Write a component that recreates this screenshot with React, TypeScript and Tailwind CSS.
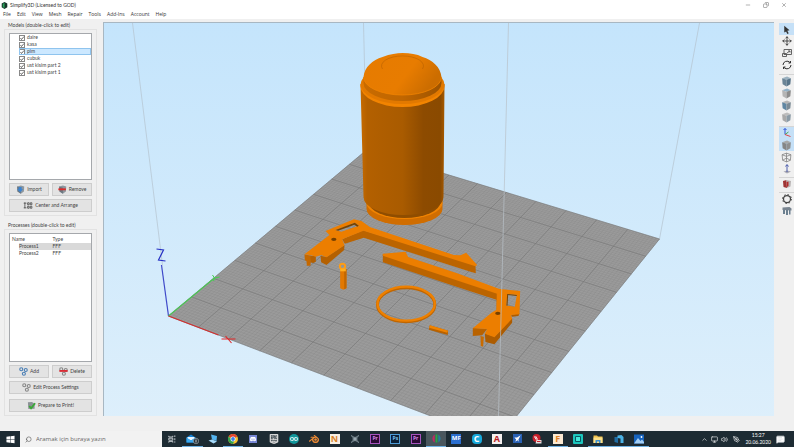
import React, { useState } from "react";
import {
  SiArduino,
  SiBlender,
  SiDiscord,
  SiEpicgames,
} from "react-icons/si";
import {
  ChevronUp,
  Copy,
  MessageSquareText,
  Minus,
  Monitor,
  Move,
  PenTool,
  Search,
  Volume2,
  X,
} from "lucide-react";

const menuItems = [
  "File",
  "Edit",
  "View",
  "Mesh",
  "Repair",
  "Tools",
  "Add-Ins",
  "Account",
  "Help",
];

const modelNames = [
  "daire",
  "kasa",
  "pim",
  "cubuk",
  "ust kisim part 2",
  "ust kisim part 1",
];

const processes = [
  { name: "Process1", type: "FFF" },
  { name: "Process2", type: "FFF" },
];

type Point = [number, number];

// Corners of the print bed: origin, back, right, front
const bed: Point[] = [
  [168, 316],
  [366, 150],
  [659, 239],
  [496, 441],
];

// Maps a position on the bed (0..1 on both sides) to the scene
const project = (u: number, v: number): Point => {
  const [a, d, c, b] = [bed[0], bed[3], bed[2], bed[1]];
  const dx1 = d[0] - c[0];
  const dx2 = b[0] - c[0];
  const sx = a[0] - d[0] + c[0] - b[0];
  const dy1 = d[1] - c[1];
  const dy2 = b[1] - c[1];
  const sy = a[1] - d[1] + c[1] - b[1];
  const det = dx1 * dy2 - dx2 * dy1;
  const g = (sx * dy2 - dx2 * sy) / det;
  const h = (dx1 * sy - sx * dy1) / det;
  const w = g * u + h * v + 1;
  const x = (d[0] - a[0] + g * d[0]) * u + (b[0] - a[0] + h * b[0]) * v + a[0];
  const y = (d[1] - a[1] + g * d[1]) * u + (b[1] - a[1] + h * b[1]) * v + a[1];
  return [x / w, y / w];
};

const gridPath = (divisions: number) => {
  let path = "";
  for (let i = 0; i <= divisions; i++) {
    const t = i / divisions;
    path += `M${project(t, 0).join(" ")}L${project(t, 1).join(" ")}`;
    path += `M${project(0, t).join(" ")}L${project(1, t).join(" ")}`;
  }
  return path;
};

const Cube = ({ top, left, right }: { top: string; left: string; right: string }) => (
  <svg viewBox="0 0 20 20" className="size-[11px]">
    <path d="M2 4 L11 1 L18 4 L10 7Z" fill={top} />
    <path d="M2 4 L10 7 V19 L3 15Z" fill={left} />
    <path d="M10 7 L18 4 L17 15 L10 19Z" fill={right} />
  </svg>
);

const Shield = ({ remove }: { remove?: boolean }) => (
  <svg viewBox="0 0 24 24" className="size-[9px] shrink-0">
    <path d="M3 4 L13 1 L22 4 L21 17 L13 23 L4 17Z" fill="#8d979f" />
    <path d="M3 4 L13 7 V23 L4 17Z" fill="#6c7780" />
    {remove ? (
      <path d="M1 9 H21 V14 H1Z" fill="#dc2a2a" />
    ) : (
      <path d="M7 5 H15 V11 H19 L11 19 L3 11 H7Z" fill="#3c83cf" />
    )}
  </svg>
);

const Gears = ({ color, badge }: { color: string; badge?: string }) => (
  <svg viewBox="0 0 24 24" className="size-[9px] shrink-0" fill="none">
    <circle cx="6" cy="6" r="4" stroke={color} strokeWidth="3" />
    <circle cx="18" cy="8" r="4" stroke={color} strokeWidth="3" />
    <circle cx="13" cy="18" r="4" stroke={color} strokeWidth="3" />
    {badge && <path d="M1 8 H23 V13 H1Z" fill={badge} />}
  </svg>
);

const SideButton = ({
  icon,
  children,
}: {
  icon: React.ReactNode;
  children: React.ReactNode;
}) => (
  <button className="flex h-[13px] flex-1 items-center justify-center gap-[2px] border border-[#cdcdcd] bg-[#e3e3e3] hover:bg-[#e5f1fb]">
    {icon}
    <span>{children}</span>
  </button>
);

const Sidebar: React.FunctionComponent = () => {
  const [checked, setChecked] = useState<boolean[]>(modelNames.map(() => true));
  const [selectedModel, setSelectedModel] = useState(2);
  const [selectedProcess, setSelectedProcess] = useState(0);

  const toggle = (index: number) => {
    setChecked(checked.map((c, i) => (i === index ? !c : c)));
    setSelectedModel(index);
  };

  return (
    <aside className="flex w-[103px] shrink-0 flex-col pr-[6px] pl-1 font-['Lato',sans-serif] text-[5px] leading-[7px] text-[#444]">
      <section className="flex flex-1 flex-col">
        <h2 className="pl-1">Models (double-click to edit)</h2>
        <div className="flex flex-1 flex-col gap-[3px] border border-[#e2e2e2] px-1 py-[3px]">
          <ul className="flex-1 border border-[#a5a8ac] bg-white">
            {modelNames.map((name, index) => (
              <li key={name} className="pl-[9px]">
                <label
                  className={`flex h-[7px] items-center gap-[2px] ${
                    selectedModel === index
                      ? "bg-[#cce8ff] outline -outline-offset-1 outline-[#8fc4ee]"
                      : ""
                  }`}
                >
                  <span className="grid size-[6px] shrink-0 place-items-center">
                    <input
                      type="checkbox"
                      checked={checked[index]}
                      onChange={() => toggle(index)}
                      className="col-start-1 row-start-1 size-[6px] appearance-none border border-[#888] bg-white"
                    />
                    {checked[index] && (
                      <svg viewBox="0 0 12 12" className="pointer-events-none z-10 col-start-1 row-start-1 size-[6px]">
                        <path d="M3 6 L5 9 L10 3" fill="none" stroke="#333" strokeWidth="1.4" />
                      </svg>
                    )}
                  </span>
                  {name}
                </label>
              </li>
            ))}
          </ul>
          <div className="flex gap-[3px]">
            <SideButton icon={<Shield />}>Import</SideButton>
            <SideButton icon={<Shield remove />}>Remove</SideButton>
          </div>
          <div className="flex">
            <SideButton
              icon={
                <svg viewBox="0 0 24 18" className="h-[7px] w-[10px]" fill="none" stroke="#444" strokeWidth="2">
                  <path d="M1 3 H8 M4 1 V16 M1 15 H8" />
                  <path d="M11 2 H15 V7 H11Z M18 2 H22 V7 H18Z M11 11 H15 V16 H11Z M18 11 H22 V16 H18Z" />
                </svg>
              }
            >
              Center and Arrange
            </SideButton>
          </div>
        </div>
      </section>

      <section className="mt-[6px] flex flex-1 flex-col">
        <h2 className="pl-1">Processes (double-click to edit)</h2>
        <div className="flex flex-1 flex-col gap-[3px] border border-[#e2e2e2] px-1 py-[3px]">
          <div className="flex-1 border border-[#a5a8ac] bg-white pt-[1px]">
            <table className="w-full text-left">
              <thead>
                <tr className="h-[8px]">
                  <th className="w-1/2 p-0 pl-[2px] font-normal">Name</th>
                  <th className="p-0 pl-[2px] font-normal">Type</th>
                </tr>
              </thead>
              <tbody>
                {processes.map((process, index) => (
                  <tr
                    key={process.name}
                    onClick={() => setSelectedProcess(index)}
                    className="h-[7px]"
                  >
                    <td className="p-0 pl-[9px]">
                      <span className={`block ${selectedProcess === index ? "bg-[#d9d9d9]" : ""}`}>
                        {process.name}
                      </span>
                    </td>
                    <td className={`p-0 pl-[2px] ${selectedProcess === index ? "bg-[#d9d9d9]" : ""}`}>
                      {process.type}
                    </td>
                  </tr>
                ))}
              </tbody>
            </table>
          </div>
          <div className="flex gap-[3px]">
            <SideButton icon={<Gears color="#4a7fb5" />}>Add</SideButton>
            <SideButton icon={<Gears color="#888" badge="#d92c35" />}>Delete</SideButton>
          </div>
          <div className="flex">
            <SideButton icon={<Gears color="#888" />}>Edit Process Settings</SideButton>
          </div>
          <div className="mt-[2px] flex">
            <SideButton
              icon={
                <svg viewBox="0 0 20 20" className="size-[9px]">
                  <path d="M2 3 L11 2 L17 6 V17 L3 18Z" fill="#8b9196" />
                  <path d="M5 11 L9 16 L18 5" fill="none" stroke="#39a935" strokeWidth="4" />
                </svg>
              }
            >
              Prepare to Print!
            </SideButton>
          </div>
        </div>
      </section>
    </aside>
  );
};

const Scene = () => (
  <svg
    viewBox="103 23 671 393"
    preserveAspectRatio="xMidYMid slice"
    className="absolute inset-0 size-full"
  >
    <defs>
      <linearGradient id="sky" x1="0" y1="0" x2="0" y2="1">
        <stop offset="0" stopColor="#c3e4fc" />
        <stop offset="1" stopColor="#e2f1fb" />
      </linearGradient>
      <linearGradient id="body" x1="0" y1="0" x2="1" y2="0">
        <stop offset="0" stopColor="#c76b00" />
        <stop offset="0.08" stopColor="#b36000" />
        <stop offset="0.5" stopColor="#a95b00" />
        <stop offset="0.75" stopColor="#8d4b00" />
        <stop offset="0.95" stopColor="#8a4a00" />
        <stop offset="1" stopColor="#a85a00" />
      </linearGradient>
      <linearGradient id="rim" x1="0" y1="0" x2="1" y2="0">
        <stop offset="0" stopColor="#c86b00" />
        <stop offset="0.5" stopColor="#c06600" />
        <stop offset="1" stopColor="#9c5300" />
      </linearGradient>
      <linearGradient id="dome" x1="0" y1="0" x2="1" y2="0.4">
        <stop offset="0" stopColor="#e67b00" />
        <stop offset="0.65" stopColor="#e87c00" />
        <stop offset="1" stopColor="#cc6d00" />
      </linearGradient>
    </defs>

    <rect x="0" y="0" width="900" height="500" fill="url(#sky)" />
    <path d="M363 23 L366 150 M699 23 L659 239" stroke="#b4c3cf" strokeWidth="0.7" />
    <path d="M132 23 L162 265" stroke="#b4c3cf" strokeWidth="0.7" />

    <polygon points={bed.map((p) => p.join(",")).join(" ")} fill="#9b9b9b" />
    <path d={gridPath(100)} stroke="#808080" strokeWidth="0.25" fill="none" />
    <path d={gridPath(10)} stroke="#777777" strokeWidth="0.6" fill="none" />

    <path d="M161 265 L168 316" stroke="#3f49c9" strokeWidth="1.2" />
    <path d="M156 249 L163 250 L158 260 L165 261" fill="none" stroke="#2530c4" strokeWidth="1.2" />
    <path d="M168 316 L214 278" stroke="#4cc455" strokeWidth="1.2" />
    <path d="M212 275 L214 278 L219 277 M214 278 L213 281" stroke="#45d24e" strokeWidth="1" fill="none" />
    <path d="M168 316 L218 335" stroke="#d22f2f" strokeWidth="1.2" />
    <path d="M221 339 L235 339 M225 336 L231 343" stroke="#e02525" strokeWidth="1.1" />

    {/* canister */}
    <path d="M366 202 V209 A38 16 0 0 0 442 209 V202Z" fill="#d06d00" />
    <path d="M366 203 A38 16 0 0 0 442 203 V199 H366Z" fill="#f08300" />
    <path d="M368 202 A36 16 0 0 0 440 202 V195 H368Z" fill="#8f4d00" />
    <path d="M360 84 L363 197 A40 18 0 0 0 443 197 L444 84Z" fill="url(#body)" />
    <ellipse cx="402" cy="85" rx="42" ry="20" fill="#e27900" />
    <path d="M360 84 V86 A42 21 0 0 0 444 86 V84 A42 20 0 0 1 360 84Z" fill="#f28400" />
    <path d="M363 78 V83 A39 18 0 0 0 441 83 V78Z" fill="url(#rim)" />
    <path d="M363 77 C364 67 372 60 382 57 C390 54 396 53 402 53 C410 53 416 54 422 57 C432 60 440 67 441 77 A39 18 0 0 1 363 77Z" fill="url(#dome)" />
    <path d="M363 77 A39 18 0 0 0 441 77" stroke="#f08300" strokeWidth="0.8" fill="none" />
    <path d="M382 69 A21 10 0 1 1 422 69" stroke="#b96200" strokeWidth="0.6" fill="none" />

    {/* flat parts lying on the bed */}
    <g transform="translate(290 205) scale(0.3333)">
      <path d="M218 76 L555 180 L556 205 L540 200 L220 98 L163 116 L155 103Z" fill="#bb6400" />
      <path d="M42 148 L62 152 L60 182 L49 182 L48 168 L43 166Z" fill="#c46800" />
      <path d="M60 152 L76 154 L76 170 L68 174 L60 172Z M90 152 L108 156 L162 120 L161 135 L108 180 L92 172Z" fill="#b46000" />
      <path
        fillRule="evenodd"
        d="M42 148 L117 90 L105 78 L190 43 L213 48 L238 66 L490 150 L510 151 L527 143 L560 180 L555 184 L219 77 L155 103 L162 121 L108 157 L92 150 L76 155 L62 151Z M135 75 L193 53 L205 62 L152 80Z"
        fill="#ec7e00"
      />
      <path d="M135 75 L193 53 L205 62 L200 65 L192 59 L143 77Z" fill="#774300" />
      <ellipse cx="130" cy="103" rx="8" ry="5" fill="#754000" />

      <path d="M277 147 L620 264 V285 L500 246 L277 172Z" fill="#bb6400" />
      <path d="M618 264 L634 254 L634 310 L618 318Z" fill="#d37000" />
      <path d="M547 368 L590 372 L575 391 L547 393Z" fill="#b86200" />
      <path d="M583 385 L612 395 L665 338 V353 L612 418 L585 411Z M662 330 L687 325 L684 333 L665 335Z" fill="#ad5c00" />
      <path d="M570 393 L580 395 L578 425 L571 423Z" fill="#c96b00" />
      <path
        fillRule="evenodd"
        d="M277 146 L345 140 L353 156 L500 205 L625 251 L689 258 L687 328 L662 330 L665 341 L612 397 L583 386 L590 372 L547 370 L603 323 L618 314 L620 266 L277 152Z M650 267 L679 270 L673 305 L648 302Z"
        fill="#ec7e00"
      />
      <path d="M650 267 L679 270 L679 273 L653 270 L651 302 L648 302Z" fill="#774300" />
      <ellipse cx="622" cy="325" rx="8" ry="5" fill="#754000" />

      <ellipse cx="347" cy="299" rx="86" ry="51" fill="none" stroke="#c06600" strokeWidth="9" />
      <ellipse cx="347" cy="296" rx="86" ry="51" fill="none" stroke="#ee8000" strokeWidth="7" />

      <path d="M149 192 H168 V250 L159 254 L149 250Z" fill="#e27800" />
      <path d="M161 192 H168 V250 L161 253Z" fill="#c16700" />
      <circle cx="156" cy="184" r="8" fill="none" stroke="#ff9c14" strokeWidth="6" />
      <path d="M149 191 H166 V199 H149Z" fill="#ffae1e" />

      <path d="M418 361 L473 377 L472 390 L415 374Z" fill="#b86200" />
      <path d="M418 361 L473 377 L470 383 L416 368Z" fill="#f08300" />
    </g>
    <path d="M508 23 L498 416" stroke="#b9c2c9" strokeWidth="0.7" />
  </svg>
);

const ToolButton = ({
  label,
  active,
  children,
}: {
  label: string;
  active?: boolean;
  children: React.ReactNode;
}) => (
  <button
    aria-label={label}
    className={`flex h-3 w-full items-center justify-center text-[#333] ${
      active ? "bg-[#c5e0f7]" : ""
    }`}
  >
    {children}
  </button>
);

const Toolbar = () => (
  <div className="ml-[5px] flex w-[15px] shrink-0 flex-col pt-px">
    <ToolButton label="Select" active>
      <svg viewBox="0 0 12 12" className="size-[9px]">
        <path d="M3 1 L10 7 L7 7.500 L9 11 L7 12 L5.500 8.500 L3 10Z" fill="#333" />
      </svg>
    </ToolButton>
    <ToolButton label="Move">
      <Move className="size-[10px]" />
    </ToolButton>
    <ToolButton label="Scale">
      <svg viewBox="0 0 20 16" className="h-2 w-[10px]" fill="none" stroke="#555" strokeWidth="1.800">
        <path d="M4 1 H19 V11 H4Z M1 9 H9 V15 H1Z M10 8 L16 4 M12 4 H16 V7" />
      </svg>
    </ToolButton>
    <ToolButton label="Rotate">
      <svg viewBox="0 0 20 20" className="size-[10px]" fill="none" stroke="#333" strokeWidth="2">
        <path d="M2 10 A8 8 0 0 1 16 5 M18 10 A8 8 0 0 1 4 15" />
        <path d="M17 2 V6 H13 M3 18 V14 H7" />
      </svg>
    </ToolButton>
    <div className="mt-[3px] flex flex-col border-t border-[#d5d5d5]">
      <ToolButton label="Default view">
        <Cube top="#9bb1bf" left="#6a8496" right="#58758a" />
      </ToolButton>
      <ToolButton label="Top view">
        <Cube top="#93b3c9" left="#b5b5b5" right="#8d8d8d" />
      </ToolButton>
      <ToolButton label="Front view">
        <Cube top="#b5b5b5" left="#5f86a2" right="#7c8b95" />
      </ToolButton>
      <ToolButton label="Side view">
        <Cube top="#bdbdbd" left="#a9a9a9" right="#8b9ba6" />
      </ToolButton>
    </div>
    <div className="mt-[3px] flex flex-col border-t border-[#d5d5d5]">
      <ToolButton label="Coordinate axes" active>
        <svg viewBox="0 0 20 20" className="size-[10px]" fill="none" strokeWidth="2">
          <path d="M6 1 V13" stroke="#3155d8" />
          <path d="M6 13 L13 8" stroke="#43ad55" />
          <path d="M6 13 L17 17" stroke="#dc4646" />
          <path d="M3 4 L6 1 L9 4" stroke="#3155d8" />
        </svg>
      </ToolButton>
      <ToolButton label="Solid model" active>
        <Cube top="#a7a7a7" left="#858585" right="#8f8f8f" />
      </ToolButton>
      <ToolButton label="Wireframe">
        <svg viewBox="0 0 20 20" className="size-[11px]" fill="none" stroke="#777" strokeWidth="1.300">
          <path d="M2 5 L10 2 L18 5 L17 15 L10 18 L3 15Z M2 5 L10 8 L18 5 M10 8 V18 M3 15 L10 11 L17 15 M10 2 V8" />
        </svg>
      </ToolButton>
      <ToolButton label="Normals">
        <svg viewBox="0 0 20 20" className="size-[10px]" fill="none">
          <path d="M3 15 L10 13 L18 15 L10 19Z" fill="#a9a9b4" />
          <path d="M10 2 V16 M7 5 L10 1 L13 5" stroke="#3d4fa5" strokeWidth="1.800" />
        </svg>
      </ToolButton>
    </div>
    <div className="mt-[2px] flex flex-col border-t border-[#d5d5d5]">
      <ToolButton label="Cross section">
        <svg viewBox="0 0 20 20" className="size-[10px]">
          <path d="M2 4 L9 2 L10 18 L3 16Z" fill="#9f3434" />
          <path d="M9 2 L18 4 L17 15 L10 18Z" fill="#b9b4b4" />
          <path d="M9 6 L13 5 V14 L10 16Z" fill="#b22a2a" />
        </svg>
      </ToolButton>
    </div>
    <div className="mt-[2px] flex flex-col border-t border-[#d5d5d5]">
      <ToolButton label="Machine control">
        <svg viewBox="0 0 20 20" className="size-[10px]" fill="none" stroke="#444">
          <circle cx="10" cy="10" r="7" strokeWidth="2.500" />
          <circle cx="10" cy="10" r="9" strokeWidth="2" strokeDasharray="3 4.069" />
        </svg>
      </ToolButton>
      <ToolButton label="Supports">
        <svg viewBox="0 0 20 20" className="size-[10px]">
          <path d="M1 3 L15 2 L19 5 V9 L1 8Z" fill="#788490" />
          <path d="M2 8 H6 V16 H2Z M8 8 H12 V18 H8Z M14 8 H17 V17 H14Z" fill="#6b7f8f" />
        </svg>
      </ToolButton>
    </div>
  </div>
);

interface TaskApp {
  name: string;
  icon: React.ReactNode;
  open?: boolean;
  active?: boolean;
}

const Tile = ({ text, className }: { text: string; className: string }) => (
  <span className={`flex size-[10px] items-center justify-center font-bold ${className}`}>
    {text}
  </span>
);

const taskApps: TaskApp[] = [
  {
    name: "Task view",
    icon: (
      <svg viewBox="0 0 20 20" className="size-2" fill="none" stroke="#e5e9ec" strokeWidth="2">
        <path d="M2 2 V5 H12 V2 M2 8 H12 V13 H2Z M2 19 V16 H12 V19 M17 1 V5 M17 8 V13 M17 16 V19" />
      </svg>
    ),
  },
  {
    name: "Mail",
    open: true,
    icon: (
      <svg viewBox="0 0 26 20" className="h-[10px] w-[13px]">
        <path d="M1 7 L10 1 L19 7 V17 H1Z" fill="#1684d8" />
        <path d="M3 6 H17 V9 L10 13 L3 9Z" fill="#e8f5ff" />
        <path d="M1 7 L10 13 L19 7 V17 H1Z" fill="#38a8f0" />
        <circle cx="20" cy="14" r="5.500" fill="#27323a" stroke="#c8d0d4" />
        <path d="M20 11 V17" stroke="#fff" strokeWidth="1.500" />
      </svg>
    ),
  },
  {
    name: "Remote desktop",
    icon: (
      <svg viewBox="0 0 20 20" className="size-[10px]">
        <path d="M6 1 L18 4 L17 14 L8 11Z" fill="#55b5f0" />
        <path d="M1 13 L8 11 L18 15 L11 19Z" fill="#a6dafa" />
      </svg>
    ),
  },
  {
    name: "Chrome",
    open: true,
    icon: (
      <svg viewBox="0 0 20 20" className="size-[10px]">
        <circle cx="10" cy="10" r="10" fill="#f6c12c" />
        <path d="M10 10 L1.300 5 A10 10 0 0 1 18.700 5Z" fill="#e4432f" />
        <path d="M1.300 5 A10 10 0 0 0 10 20 L13 12 L8 12Z" fill="#2fa24f" />
        <circle cx="10" cy="10" r="5" fill="#fff" />
        <circle cx="10" cy="10" r="3.800" fill="#3f80e8" />
      </svg>
    ),
  },
  {
    name: "Discord",
    icon: (
      <span className="flex size-2 items-center justify-center bg-[#7686d4] text-white">
        <SiDiscord className="size-[6px]" />
      </span>
    ),
  },
  { name: "Epic Games", icon: <SiEpicgames className="size-[10px] text-[#d7d7d7]" /> },
  {
    name: "Arduino",
    icon: (
      <span className="flex size-[10px] items-center justify-center rounded-full bg-[#10969b] text-white">
        <SiArduino className="size-2" />
      </span>
    ),
  },
  { name: "Blender", icon: <SiBlender className="size-[10px] text-[#ec8a35]" /> },
  { name: "Netfabb", icon: <Tile text="N" className="bg-[#f7efe3] text-[9px] text-[#d9822b]" /> },
  {
    name: "Mesh tool",
    icon: (
      <svg viewBox="0 0 20 20" className="size-[10px]" fill="none" stroke="#8d9ca4" strokeWidth="1.300">
        <path d="M2 3 L18 17 M18 3 L2 17 M2 3 L10 7 L18 3 M2 17 L10 13 L18 17 M6 6 V14 M14 6 V14" />
        <circle cx="10" cy="10" r="3" fill="#9eabb2" />
      </svg>
    ),
  },
  { name: "Premiere Pro", icon: <Tile text="Pr" className="border border-[#a653bd] bg-[#2b0a36] text-[5px] text-[#d58be8]" /> },
  { name: "Photoshop", icon: <Tile text="Ps" className="border border-[#4d9bd6] bg-[#0a2038] text-[5px] text-[#7fc5f5]" /> },
  { name: "Prelude", icon: <Tile text="Pr" className="border border-[#a653bd] bg-[#2b0a36] text-[5px] text-[#d58be8]" /> },
  {
    name: "Simplify3D",
    open: true,
    active: true,
    icon: (
      <svg viewBox="0 0 20 20" className="size-[9px]">
        <path d="M6 1 V19 C2 17 1 13 1 10 C1 6 3 3 6 1Z" fill="#c02b63" />
        <path d="M8 1 H12 V19 H8Z" fill="#26a844" />
        <path d="M14 1 C17 3 19 6 19 10 C19 14 17 17 14 19Z" fill="#277c9d" />
      </svg>
    ),
  },
  { name: "Meshmixer", icon: <Tile text="MF" className="bg-[#2b6fd0] text-[6px] text-white" /> },
  { name: "Cura", icon: <Tile text="C" className="rounded-sm bg-[#18a9dc] text-[9px] text-white" /> },
  { name: "AutoCAD", icon: <Tile text="A" className="bg-[#f5f0ef] text-[9px] text-[#b51d24]" /> },
  {
    name: "Plane",
    icon: (
      <svg viewBox="0 0 20 20" className="size-[9px]">
        <rect width="20" height="20" fill="#2961b4" />
        <path d="M17 3 L12 12 L13 17 L10 14 L5 17 L7 12 L3 8 L9 8Z" fill="#fff" />
      </svg>
    ),
  },
  {
    name: "SolidWorks",
    icon: (
      <svg viewBox="0 0 20 20" className="size-[10px]">
        <circle cx="9" cy="8" r="8" fill="#c9202b" />
        <path d="M4 6 H9 L7 10 H12" stroke="#fff" strokeWidth="2" fill="none" />
        <path d="M9 12 H19 V19 H7Z" fill="#e4e0df" />
        <path d="M10 15 H17" stroke="#c9202b" strokeWidth="2" />
      </svg>
    ),
  },
  { name: "Fusion 360", open: true, icon: <Tile text="F" className="bg-[#fbe9d2] text-[9px] text-[#df8125]" /> },
  {
    name: "Filmora",
    icon: (
      <svg viewBox="0 0 20 20" className="size-[10px]">
        <rect width="20" height="20" rx="2" fill="#1cc6bd" />
        <path d="M5 5 H15 V15 H5Z" fill="#42eadc" stroke="#0a5964" strokeWidth="2" />
      </svg>
    ),
  },
  {
    name: "File Explorer",
    open: true,
    icon: (
      <svg viewBox="0 0 20 20" className="size-[10px]">
        <path d="M1 3 H8 L10 5 H19 V18 H1Z" fill="#f1c24c" />
        <path d="M1 7 H19 V18 H1Z" fill="#fbe08a" />
        <path d="M5 18 V12 H15 V18 H12 V15 H8 V18Z" fill="#3f91cf" />
      </svg>
    ),
  },
  {
    name: "3D Builder",
    open: true,
    icon: (
      <svg viewBox="0 0 20 20" className="size-[10px]">
        <path d="M1 6 H8 V18 L1 16Z" fill="#1f6ca3" />
        <path d="M7 3 L15 2 L19 6 V18 H13 V9 L7 8Z" fill="#4bb2e6" />
      </svg>
    ),
  },
  {
    name: "Photos",
    open: true,
    icon: (
      <svg viewBox="0 0 20 20" className="size-[10px]">
        <rect width="20" height="18" y="1" fill="#1763bd" />
        <path d="M0 19 L8 8 L13 14 L16 11 L20 16 V19Z" fill="#a4cff5" />
        <circle cx="15" cy="6" r="1.800" fill="#fff" />
      </svg>
    ),
  },
];

const Taskbar = () => (
  <footer className="flex h-4 shrink-0 items-stretch bg-[#1d2b33] font-['Open_Sans',sans-serif] text-[5px] text-white">
    <button aria-label="Start" className="flex w-5 items-center justify-center">
      <svg viewBox="0 0 20 20" className="size-[9px]" fill="#fff">
        <path d="M1 4 L9 3 V9.500 H1Z M10 3 L19 1.500 V9.500 H10Z M1 10.500 H9 V17 L1 16Z M10 10.500 H19 V18.500 L10 17Z" />
      </svg>
    </button>
    <label className="flex w-[142px] shrink-0 items-center gap-1 bg-[#f2f2f2] pl-[5px] text-[#555]">
      <Search className="size-[7px] shrink-0 -scale-x-100" />
      <input
        type="text"
        aria-label="Aramak için buraya yazın"
        placeholder="Aramak için buraya yazın"
        className="w-full bg-transparent text-[6px] leading-3 outline-none placeholder:text-[#666]"
      />
    </label>
    <nav className="flex w-[487px] shrink-0">
      {taskApps.map((app) => (
        <button
          key={app.name}
          aria-label={app.name}
          className={`flex flex-1 items-center justify-center border-b ${
            app.open ? "border-[#6fb1e2]" : "border-transparent"
          } ${app.active ? "bg-[#4a565d]" : ""}`}
        >
          {app.icon}
        </button>
      ))}
    </nav>
    <div className="ml-auto flex items-center gap-[3px] pr-[9px]">
      <ChevronUp className="size-[7px]" />
      <Monitor className="size-[7px]" />
      <Volume2 className="size-[7px]" />
      <PenTool className="mx-[2px] size-[7px]" />
      <div className="flex flex-col items-center font-['Lato',sans-serif] leading-[7px]">
        <span>15:27</span>
        <span>20.06.2020</span>
      </div>
      <MessageSquareText className="ml-[2px] size-[9px] fill-white text-[#d8dcdf]" />
    </div>
  </footer>
);

const App: React.FunctionComponent = () => {
  return (
    <div className="flex h-screen w-full flex-col overflow-hidden bg-[#f0f0f0] font-['Open_Sans',sans-serif] text-[5px] text-[#333]">
      <header className="bg-white">
        <div className="flex h-[10px] items-center pl-[1px]">
          <svg viewBox="0 0 20 20" className="size-[7px]">
            <path d="M10 0 L18 4 V15 L10 20 L2 15 V4Z" fill="#17352a" />
            <path d="M10 2 V18 L5 14 V6Z" fill="#2aa35b" />
          </svg>
          <h1 className="ml-[2px] font-['Lato',sans-serif] leading-[9px]">
            Simplify3D (Licensed to GOD)
          </h1>
          <div className="ml-auto flex items-center gap-3 pr-[7px] text-[#666]">
            <button aria-label="Minimize"><Minus className="size-[6px]" /></button>
            <button aria-label="Restore"><Copy className="size-[6px] -scale-x-100" /></button>
            <button aria-label="Close"><X className="size-[6px]" /></button>
          </div>
        </div>
        <nav className="flex h-[9px] items-center gap-[6px] pl-[3px]">
          {menuItems.map((item) => (
            <button key={item} className="leading-[9px]">
              {item}
            </button>
          ))}
        </nav>
      </header>

      <div className="flex flex-1 pt-[3px] pb-[15px]">
        <Sidebar />
        <main className="relative flex-1 overflow-hidden border-t border-l border-[#a8b7c2]">
          <Scene />
        </main>
        <Toolbar />
      </div>

      <Taskbar />
    </div>
  );
};

export default App;
